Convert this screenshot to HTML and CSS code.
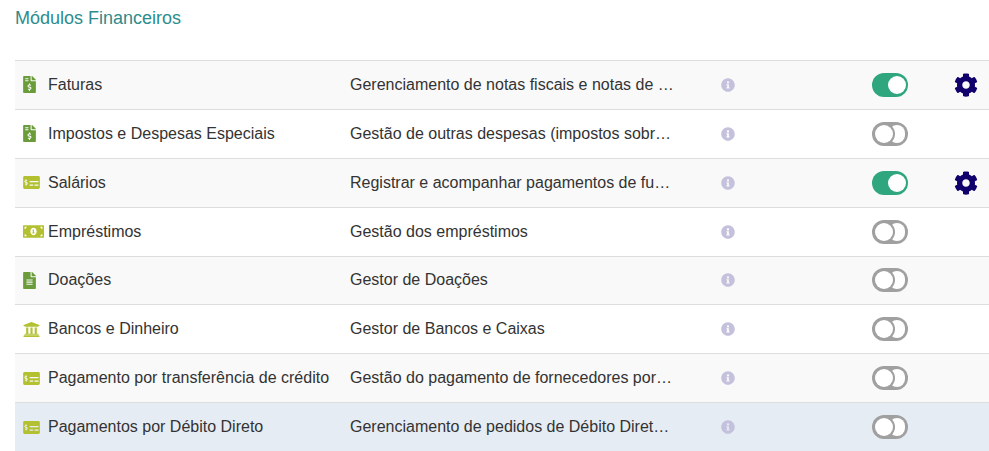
FILE: index.html
```html
<!DOCTYPE html>
<html lang="pt">
<head>
<meta charset="utf-8">
<title>Módulos Financeiros</title>
<link rel="stylesheet" href="styles.css">
</head>
<body>
<svg class="defs" width="0" height="0" aria-hidden="true">
  <defs>
    <symbol id="i-bill" viewBox="0 0 384 512"><path fill="currentColor" d="M377 105 279 7c-4.500-4.500-10.600-7-17-7H256v128h128v-6.100c0-6.300-2.500-12.400-7-16.900zM224 136V0H24C10.700 0 0 10.700 0 24v464c0 13.300 10.700 24 24 24h336c13.300 0 24-10.700 24-24V160H248c-13.200 0-24-10.800-24-24zM64 72c0-4.400 3.600-8 8-8h80c4.400 0 8 3.600 8 8v16c0 4.400-3.600 8-8 8H72c-4.400 0-8-3.600-8-8V72zm0 80v-16c0-4.400 3.600-8 8-8h80c4.400 0 8 3.600 8 8v16c0 4.400-3.600 8-8 8H72c-4.400 0-8-3.600-8-8zm144 263.900V440c0 4.400-3.600 8-8 8h-16c-4.400 0-8-3.600-8-8v-24.300c-11.300-.6-22.300-4.500-31.400-11.400-3.900-2.900-4.100-8.800-.6-12.100l11.800-11.200c2.800-2.600 6.900-2.800 10.200-.7 3.900 2.400 8.300 3.700 12.800 3.700h28.100c6.500 0 11.800-5.900 11.800-13.200 0-6-3.600-11.200-8.800-12.800l-45-13.500c-18.600-5.600-31.600-23.400-31.600-43.400 0-24.500 19-44.400 42.700-45.100V232c0-4.400 3.600-8 8-8h16c4.400 0 8 3.600 8 8v24.300c11.300.6 22.300 4.500 31.400 11.400 3.900 2.900 4.100 8.800.6 12.100l-11.800 11.200c-2.800 2.600-6.900 2.800-10.200.7-3.900-2.400-8.300-3.700-12.800-3.700h-28.100c-6.500 0-11.800 5.900-11.800 13.200 0 6 3.600 11.200 8.800 12.800l45 13.500c18.600 5.600 31.600 23.400 31.600 43.400 0 24.500-19 44.400-42.700 45z"/></symbol>
    <symbol id="i-file" viewBox="0 0 384 512"><path fill="currentColor" d="M224 136V0H24C10.700 0 0 10.700 0 24v464c0 13.300 10.700 24 24 24h336c13.300 0 24-10.700 24-24V160H248c-13.200 0-24-10.800-24-24zm64 236c0 6.600-5.400 12-12 12H108c-6.600 0-12-5.400-12-12v-8c0-6.600 5.400-12 12-12h168c6.600 0 12 5.400 12 12v8zm0-64c0 6.600-5.400 12-12 12H108c-6.600 0-12-5.400-12-12v-8c0-6.600 5.400-12 12-12h168c6.600 0 12 5.400 12 12v8zm0-72v8c0 6.600-5.400 12-12 12H108c-6.600 0-12-5.400-12-12v-8c0-6.600 5.400-12 12-12h168c6.600 0 12 5.400 12 12zm96-114.100v6.100H256V0h6.100c6.400 0 12.500 2.500 17 7l97.900 98c4.500 4.500 7 10.600 7 16.900z"/></symbol>
    <symbol id="i-card" viewBox="0 0 576 448"><path fill="currentColor" fill-rule="evenodd" d="M48 0h480c26.500 0 48 21.500 48 48v352c0 26.500-21.500 48-48 48H48c-26.500 0-48-21.500-48-48V48C0 21.500 21.500 0 48 0zM80 110v38h0c-22 4-36 20-36 44 0 24 14 38 36 42l34 8c10 2 10 18-2 18H66v34h20v36h34v-36c22-4 36-20 36-44 0-24-14-38-36-42l-34-8c-10-2-10-18 2-18h44v-34h-18v-38zM224 170v46h304v-46zM224 290v46h120v-46zM392 290v46h136v-46z"/></symbol>
    <symbol id="i-money" viewBox="0 0 640 384"><path fill="currentColor" fill-rule="evenodd" d="M16 0h608c8.800 0 16 7.200 16 16v352c0 8.800-7.200 16-16 16H16c-8.800 0-16-7.200-16-16V16C0 7.200 7.200 0 16 0zM320 80c-53 0-96 50-96 112s43 112 96 112 96-50 96-112-43-112-96-112zM48 48v64c36 0 64-28 64-64zM528 48c0 36 28 64 64 64V48zM48 272v64h64c0-36-28-64-64-64zM592 272c-36 0-64 28-64 64h64zM300 130h32v92h20v30h-68v-30h16v-52h-14v-12c8 0 14-20 14-28z"/></symbol>
    <symbol id="i-bank" viewBox="0 0 512 512"><path fill="currentColor" d="M496 128v16a8 8 0 0 1-8 8h-24v12c0 6.600-5.400 12-12 12H60c-6.600 0-12-5.400-12-12v-12H24a8 8 0 0 1-8-8v-16a8 8 0 0 1 4.900-7.400l232-88a8 8 0 0 1 6.200 0l232 88A8 8 0 0 1 496 128zm-24 304H40c-13.300 0-24 10.700-24 24v16a8 8 0 0 0 8 8h464a8 8 0 0 0 8-8v-16c0-13.300-10.700-24-24-24zM96 192v192H60c-6.600 0-12 5.400-12 12v20h416v-20c0-6.600-5.400-12-12-12h-36V192h-64v192h-64V192h-64v192h-64V192H96z"/></symbol>
    <symbol id="i-info" viewBox="0 0 512 512"><path fill="currentColor" d="M256 8C119 8 8 119 8 256s111 248 248 248 248-111 248-248S393 8 256 8zm0 110c23.200 0 42 18.800 42 42s-18.800 42-42 42-42-18.800-42-42 18.800-42 42-42zm56 254c0 6.600-5.400 12-12 12h-88c-6.600 0-12-5.400-12-12v-24c0-6.600 5.400-12 12-12h12v-64h-12c-6.600 0-12-5.400-12-12v-24c0-6.600 5.400-12 12-12h64c6.600 0 12 5.400 12 12v100h12c6.600 0 12 5.400 12 12v24z"/></symbol>
    <symbol id="i-gear" viewBox="0 0 512 512"><path fill="currentColor" d="M487.400 315.700l-42.600-24.600c4.300-23.200 4.300-47 0-70.200l42.600-24.600c4.900-2.800 7.100-8.600 5.500-14-11.100-35.600-30-67.800-54.700-94.600-3.800-4.100-10-5.100-14.800-2.300L380.800 110c-17.900-15.400-38.500-27.300-60.800-35.100V25.800c0-5.600-3.900-10.500-9.400-11.700-36.700-8.200-74.300-7.800-109.200 0-5.500 1.200-9.400 6.100-9.400 11.700V75c-22.200 7.900-42.800 19.800-60.800 35.100L88.700 85.500c-4.900-2.800-11-1.900-14.800 2.300-24.700 26.700-43.600 58.900-54.700 94.600-1.700 5.400.6 11.200 5.500 14L67.300 221c-4.300 23.200-4.300 47 0 70.200l-42.600 24.600c-4.900 2.800-7.100 8.600-5.500 14 11.100 35.600 30 67.800 54.700 94.600 3.800 4.100 10 5.100 14.800 2.300l42.600-24.600c17.900 15.400 38.500 27.300 60.800 35.100v49.200c0 5.600 3.900 10.500 9.400 11.700 36.700 8.200 74.300 7.800 109.200 0 5.500-1.200 9.400-6.100 9.400-11.700v-49.200c22.200-7.900 42.800-19.800 60.800-35.100l42.600 24.600c4.900 2.800 11 1.900 14.800-2.300 24.700-26.700 43.600-58.900 54.700-94.600 1.500-5.500-.7-11.300-5.600-14.100zM256 336c-44.100 0-80-35.900-80-80s35.900-80 80-80 80 35.900 80 80-35.900 80-80 80z"/></symbol>
  </defs>
</svg>

<main class="page">
  <h1 class="title">Módulos Financeiros</h1>
  <div class="modules">
    <div class="row">
      <div class="name"><svg class="icon file-icon green"><use href="#i-bill"/></svg><span>Faturas</span></div>
      <div class="desc">Gerenciamento de notas fiscais e notas de …</div>
      <div class="info"><svg class="info-icon"><use href="#i-info"/></svg></div>
      <div class="toggle-cell"><span class="toggle on"></span></div>
      <div class="gear-cell"><svg class="gear"><use href="#i-gear"/></svg></div>
    </div>
    <div class="row">
      <div class="name"><svg class="icon file-icon green"><use href="#i-bill"/></svg><span>Impostos e Despesas Especiais</span></div>
      <div class="desc">Gestão de outras despesas (impostos sobr…</div>
      <div class="info"><svg class="info-icon"><use href="#i-info"/></svg></div>
      <div class="toggle-cell"><span class="toggle"></span></div>
      <div class="gear-cell"></div>
    </div>
    <div class="row">
      <div class="name"><svg class="icon card-icon lime"><use href="#i-card"/></svg><span>Salários</span></div>
      <div class="desc">Registrar e acompanhar pagamentos de fu…</div>
      <div class="info"><svg class="info-icon"><use href="#i-info"/></svg></div>
      <div class="toggle-cell"><span class="toggle on"></span></div>
      <div class="gear-cell"><svg class="gear"><use href="#i-gear"/></svg></div>
    </div>
    <div class="row">
      <div class="name"><svg class="icon money-icon lime"><use href="#i-money"/></svg><span>Empréstimos</span></div>
      <div class="desc">Gestão dos empréstimos</div>
      <div class="info"><svg class="info-icon"><use href="#i-info"/></svg></div>
      <div class="toggle-cell"><span class="toggle"></span></div>
      <div class="gear-cell"></div>
    </div>
    <div class="row">
      <div class="name"><svg class="icon file-icon green"><use href="#i-file"/></svg><span>Doações</span></div>
      <div class="desc">Gestor de Doações</div>
      <div class="info"><svg class="info-icon"><use href="#i-info"/></svg></div>
      <div class="toggle-cell"><span class="toggle"></span></div>
      <div class="gear-cell"></div>
    </div>
    <div class="row">
      <div class="name"><svg class="icon bank-icon lime"><use href="#i-bank"/></svg><span>Bancos e Dinheiro</span></div>
      <div class="desc">Gestor de Bancos e Caixas</div>
      <div class="info"><svg class="info-icon"><use href="#i-info"/></svg></div>
      <div class="toggle-cell"><span class="toggle"></span></div>
      <div class="gear-cell"></div>
    </div>
    <div class="row">
      <div class="name"><svg class="icon card-icon lime"><use href="#i-card"/></svg><span>Pagamento por transferência de crédito</span></div>
      <div class="desc">Gestão do pagamento de fornecedores por…</div>
      <div class="info"><svg class="info-icon"><use href="#i-info"/></svg></div>
      <div class="toggle-cell"><span class="toggle"></span></div>
      <div class="gear-cell"></div>
    </div>
    <div class="row hovered">
      <div class="name"><svg class="icon card-icon lime"><use href="#i-card"/></svg><span>Pagamentos por Débito Direto</span></div>
      <div class="desc">Gerenciamento de pedidos de Débito Diret…</div>
      <div class="info"><svg class="info-icon"><use href="#i-info"/></svg></div>
      <div class="toggle-cell"><span class="toggle"></span></div>
      <div class="gear-cell"></div>
    </div>
  </div>
</main>
</body>
</html>
```
FILE: styles.css
```css
* { box-sizing: border-box; }
html, body { margin: 0; padding: 0; background: #fff; }
body {
  font-family: "Liberation Sans", Arial, sans-serif;
  font-size: 16px;
  color: #333;
  overflow: hidden;
}
.defs { position: absolute; }
.page { padding: 8px 0 0 15px; }
.title {
  margin: 0 0 31px;
  font-size: 18px;
  font-weight: 400;
  line-height: 21px;
  color: #2d8c8e;
}
.modules { border-top: 1px solid #ddd; }
.row {
  display: grid;
  grid-template-columns: 335px 371px 151px 1fr;
  grid-template-columns: 335px 371px 151px 82px 25px;
  align-items: center;
  height: 48.875px;
  border-bottom: 1px solid #ddd;
  background: #fff;
  line-height: 18px;
}
.row:nth-child(odd) { background: #f9f9f9; }
.row.hovered { background: #e6ecf4; }
.name { display: flex; align-items: center; padding-left: 8px; white-space: nowrap; }
.icon { display: block; flex: none; height: 16px; }
.name span { margin-left: 8px; }
.green { color: #6a9c3a; }
.lime { color: #b3c130; }
.file-icon { width: 13px; margin-right: 4px; height: 17px; }
.card-icon { width: 17px; height: 13px; }
.money-icon { width: 21px; height: 13px; margin-right: -4px; }
.bank-icon { width: 17px; height: 17px; }
.desc { white-space: nowrap; }
.info-icon { display: block; width: 14px; height: 14px; color: #c3c1dc; }
.toggle-cell { display: flex; }
.toggle {
  position: relative;
  display: block;
  width: 36px;
  height: 24px;
  border-radius: 12px;
  background: #a0a0a0;
}
.toggle::before {
  content: "";
  position: absolute;
  left: 17px;
  top: 3px;
  width: 16px;
  height: 18px;
  border-radius: 9px;
  background: #fff;
}
.toggle::after {
  content: "";
  position: absolute;
  left: 3px;
  top: 3px;
  width: 18px;
  height: 18px;
  border-radius: 50%;
  background: #fff;
  box-shadow: 0 0 0 2px #a0a0a0;
}
.toggle.on { background: #2fa67e; }
.toggle.on::before { display: none; }
.toggle.on::after { left: 16px; box-shadow: none; }
.gear-cell { display: flex; }
.gear { display: block; width: 24px; height: 24px; color: #10006b; }
```
